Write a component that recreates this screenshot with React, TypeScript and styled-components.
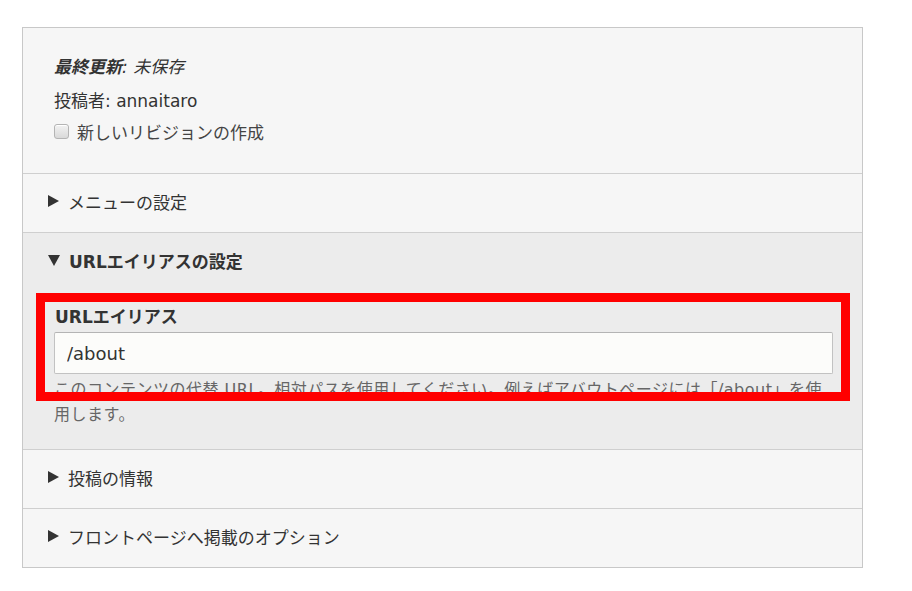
import styled, {createGlobalStyle} from "styled-components";

const GlobalStyle = createGlobalStyle`
    body {
        margin: 0;
        background: #ffffff;
        font-family: "DejaVu Sans", "Noto Sans CJK JP", sans-serif;
        color: #333333;
    }
`

function App() {
    return (
        <>
            <GlobalStyle/>
            <StyledPage>
                <StyledPanel>
                    <MetaSection/>
                    <CollapsedRow title="メニューの設定"/>
                    <AliasSection/>
                    <CollapsedRow title="投稿の情報"/>
                    <CollapsedRow title="フロントページへ掲載のオプション"/>
                </StyledPanel>
            </StyledPage>
        </>
    )
}

function MetaSection() {
    return (
        <StyledMeta>
            <StyledMetaLine>
                <StyledLastSaved><strong>最終更新</strong>: 未保存</StyledLastSaved>
            </StyledMetaLine>
            <StyledMetaLine>投稿者: annaitaro</StyledMetaLine>
            <StyledCheckRow>
                <StyledCheckbox type="checkbox"/>
                <span>新しいリビジョンの作成</span>
            </StyledCheckRow>
        </StyledMeta>
    )
}

function CollapsedRow({title}: {title: string}) {
    return (
        <StyledRow>
            <StyledSummary>
                <StyledCaret $open={false}/>
                {title}
            </StyledSummary>
        </StyledRow>
    )
}

function AliasSection() {
    return (
        <StyledOpenRow>
            <StyledSummary $bold>
                <StyledCaret $open/>
                URLエイリアスの設定
            </StyledSummary>
            <StyledAliasBody>
                <StyledFormItem>
                    <StyledLabel htmlFor="alias">URLエイリアス</StyledLabel>
                    <StyledInput id="alias" type="text" defaultValue="/about"/>
                    <StyledHelp>
                        このコンテンツの代替 URL。相対パスを使用してください。例えばアバウトページには「/about」を使用します。
                    </StyledHelp>
                    <StyledHighlight/>
                </StyledFormItem>
            </StyledAliasBody>
        </StyledOpenRow>
    )
}

const StyledPage = styled.div`
    padding: 27px 0 24px 22px;
`

const StyledPanel = styled.div`
    box-sizing: border-box;
    width: 841px;
    background: #f6f6f6;
    border: 1px solid #c8c8c8;
`

const StyledMeta = styled.div`
    padding: 23px 0 27px 31px;
    font-size: 17px;
`

const StyledMetaLine = styled.div`
    height: 32px;
    line-height: 32px;
    margin-bottom: 2px;

    & + & {
        margin-bottom: 0;
    }
`

const StyledLastSaved = styled.em`
    font-style: italic;
    strong {
        font-weight: 700;
    }
`

const StyledCheckRow = styled.label`
    display: flex;
    align-items: center;
    gap: 8px;
    height: 29px;
    color: #444;
`

const StyledCheckbox = styled.input`
    appearance: none;
    margin: 0;
    width: 15px;
    height: 15px;
    border: 1px solid #b4b4b4;
    border-radius: 3px;
    background: linear-gradient(#f2f2f2, #d9d9d9);
    box-shadow: inset 0 1px 0 #fff;
`

const StyledRow = styled.div`
    border-top: 1px solid #cfcfcf;
`

const StyledOpenRow = styled.div`
    border-top: 1px solid #cfcfcf;
    background: #ececec;
`

const StyledSummary = styled.div<{$bold?: boolean}>`
    box-sizing: border-box;
    display: flex;
    align-items: center;
    gap: 9px;
    height: 58px;
    padding: 0 0 4px 25px;
    font-size: 17px;
    font-weight: ${p => p.$bold ? 700 : 400};
    color: #333;
`

const StyledCaret = styled.span<{$open: boolean}>`
    flex: none;
    width: 0;
    height: 0;
    border-style: solid;
    ${p => p.$open
        ? `border-width: 11px 6px 0 6px; border-color: #333 transparent transparent transparent;`
        : `border-width: 6px 0 6px 11px; border-color: transparent transparent transparent #333;`}
`

const StyledAliasBody = styled.div`
    padding: 14px 29px 22px 31px;
`

const StyledFormItem = styled.div`
    position: relative;
`

const StyledLabel = styled.label`
    display: block;
    height: 24px;
    line-height: 24px;
    font-size: 17px;
    font-weight: 700;
    padding-left: 1px;
    color: #333;
`

const StyledInput = styled.input`
    display: block;
    box-sizing: border-box;
    width: 100%;
    height: 42px;
    margin-top: 3px;
    padding: 0 12px;
    font-family: inherit;
    font-size: 18px;
    color: #333;
    background: #fcfcfa;
    border: 1px solid #c2c2c2;
    border-top-color: #b4b4b4;
    border-radius: 2px;
    outline: none;
`

const StyledHelp = styled.div`
    margin-top: 3px;
    font-size: 16px;
    line-height: 25px;
    letter-spacing: 0.5px;
    color: #666;
`

const StyledHighlight = styled.div`
    position: absolute;
    top: -12px;
    left: -18px;
    right: -17px;
    height: 108px;
    box-sizing: border-box;
    border: 9px solid #ff0000;
    pointer-events: none;
`

export default App;
